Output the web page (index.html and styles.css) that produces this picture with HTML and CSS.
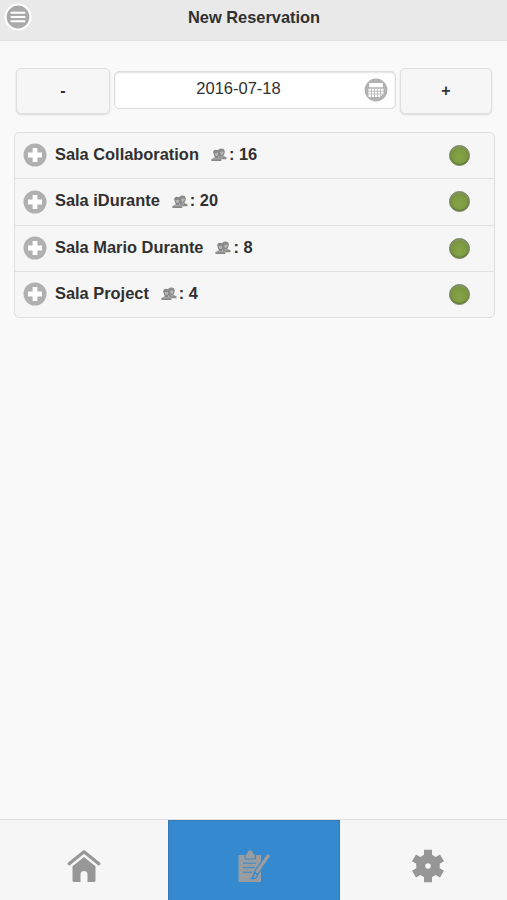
FILE: index.html
```html
<!DOCTYPE html>
<html lang="en">
<head>
<meta charset="utf-8">
<title>New Reservation</title>
<link rel="stylesheet" href="styles.css">
</head>
<body>
<svg class="defs" width="0" height="0" aria-hidden="true">
  <defs>
    <symbol id="plus" viewBox="0 0 24 24"><circle cx="12" cy="12" r="11.5" fill="#b0b0b0"/><path d="M12 5v14M5 12h14" stroke="#fff" stroke-width="4.8"/></symbol>
    <symbol id="people" viewBox="0 0 16 14">
      <path d="M7 3.5C7 1.2 8.2.5 10.3.5S14 1.500 13.800 4L13.200 6.500 12.300 8 15.500 9.200V11.200H9L7 8z" fill="#8b8b8b"/>
      <path d="M2.200 4.500C2.200 2.300 3.700 1.600 5.700 1.900 7.700 2 8.500 3.500 8.200 5.500L7.200 8.200 6.800 9.200 10.300 10.700V13H.4V10.900L4 9.300 3.300 7.900z" fill="#858585"/>
      <path d="M3.500 5.200 6.500 4.400 7.500 5.400 6.500 8H4.500zM9 4 11.800 3.200 12.800 4.500 11.500 7H10z" fill="#b4b4b4"/>
      <path d="M.5 10.800H10.500M9.500 8.800H12.500" stroke="#ddd" stroke-width=".5"/>
    </symbol>
  </defs>
</svg>
<div class="page">
  <header class="header">
    <svg class="menu" viewBox="0 0 28 28"><circle cx="14" cy="14" r="13.500" fill="#fff"/><circle cx="14" cy="14" r="11.400" fill="#aaa"/><path d="M7.500 9.700h13M7.500 14h13M7.500 18.300h13" stroke="#fff" stroke-width="2" stroke-linecap="round"/></svg>
    <h1>New Reservation</h1>
  </header>
  <main class="content">
    <div class="datebar">
      <button class="step">-</button>
      <div class="date"><span>2016-07-18</span>
        <svg class="calendar" viewBox="0 0 24 24"><circle cx="12" cy="12" r="11.400" fill="#b1b1b1"/><path d="M5.200 5h13.600v4.300H5.200zM4.500 10.700h15v4.800l-3.300 3.400H4.500z" fill="#fff"/><path d="M4.500 13.300h15M4.500 16h15M7.500 10.700v8.200M10.500 10.700v8.200M13.500 10.700v8.200M16.500 10.700v8.200" stroke="#b9b9b9" stroke-width=".9"/></svg>
      </div>
      <button class="step">+</button>
    </div>
    <ul class="rooms">
      <li><svg class="plus"><use href="#plus"/></svg><span class="name">Sala Collaboration</span><svg class="people"><use href="#people"/></svg><span class="count">: 16</span><i class="status"></i></li>
      <li><svg class="plus"><use href="#plus"/></svg><span class="name">Sala iDurante</span><svg class="people"><use href="#people"/></svg><span class="count">: 20</span><i class="status"></i></li>
      <li><svg class="plus"><use href="#plus"/></svg><span class="name">Sala Mario Durante</span><svg class="people"><use href="#people"/></svg><span class="count">: 8</span><i class="status"></i></li>
      <li><svg class="plus"><use href="#plus"/></svg><span class="name">Sala Project</span><svg class="people"><use href="#people"/></svg><span class="count">: 4</span><i class="status"></i></li>
    </ul>
  </main>
  <nav class="tabs">
    <a><svg viewBox="0 0 34 34"><path d="M2.200 14.800 17 2.800 31.800 14.800" fill="none" stroke="#979797" stroke-width="3.200" stroke-linecap="round" stroke-linejoin="round"/><path d="M17 8 28.500 17.200v14.300q0 1.500-1.500 1.500h-6.500V25.500a3.500 3.500 0 0 0-7 0V33H7q-1.500 0-1.500-1.500V17.200z" fill="#979797"/></svg></a>
    <a class="active"><svg viewBox="0 0 34 34"><path d="M1.500 6H24v27H1.500z" fill="#999da1"/><path d="M8 10V5.800L9.700 4.500Q10 .8 13.200.8t3.500 3.700l1.700 1.300V10z" fill="#999da1" stroke="#3489cf" stroke-width="1"/><path d="M6 14.200h13M6 18.700h12M6 23.200h9" stroke="#3489cf" stroke-width="1"/><path d="M31 7 19.500 23.500" stroke="#3489cf" stroke-width="5.600" stroke-linecap="round"/><path d="M31 7 20 22.800" stroke="#999da1" stroke-width="3.400" stroke-linecap="round"/><path d="M17.500 24.500q2.500-.5 3 1.500-.2 4-6 3.500 2-1.500 3-5z" fill="#999da1" stroke="#3489cf" stroke-width="1.300"/></svg></a>
    <a class="settings"><svg viewBox="0 0 34 34"><g stroke="#969696" stroke-width="8" stroke-linecap="butt"><path d="M17 .8v32.400M3 8.900l28 16.200M31 8.900 3 25.100"/></g><circle cx="17" cy="17" r="11.800" fill="#969696"/><circle cx="17" cy="17" r="2.800" fill="#f6f6f6"/></svg></a>
  </nav>
</div>
</body>
</html>
```
FILE: styles.css
```css
* { box-sizing: border-box; }
body {
  margin: 0;
  background: #f9f9f9;
  color: #303030;
  font-family: "Liberation Sans", Arial, sans-serif;
  font-size: 16.4px;
}
.defs { position: absolute; }
.page { display: flex; flex-direction: column; height: 900px; overflow: hidden; }
.header {
  display: grid;
  grid-template-columns: 34px 1fr 33px;
  height: 41px;
  padding-top: 3px;
  background: #e9e9e9;
  border-bottom: 1px solid #e1e1e1;
}
.menu { width: 28px; height: 28px; margin-left: 3.5px; }
h1 { margin: 0; padding-top: 1px; font-size: 16.4px; line-height: 26px; text-align: center; }
.content { flex: 1; padding: 27px 12px 0 14px; }
.datebar { display: flex; align-items: flex-start; gap: 4px; padding-left: 2px; padding-right: 3px; height: 64px; }
.step {
  width: 94px;
  height: 46px;
  padding: 0;
  background: #f6f6f6;
  border: 1px solid #dfdfdf;
  border-radius: 5px;
  box-shadow: 0 1px 2px rgba(0, 0, 0, .12);
  color: #303030;
  font: bold 16px "Liberation Sans", Arial, sans-serif;
}
.step:last-child { width: 92px; }
.date {
  display: flex;
  flex: 1;
  align-items: center;
  height: 38px;
  margin-top: 3px;
  padding-right: 7px;
  background: #fff;
  border: 1px solid #dcdcdc;
  border-radius: 5px;
  box-shadow: inset 0 1px 2px rgba(0, 0, 0, .12);
}
.date span { flex: 1; padding-right: 2px; padding-bottom: 3px; font-size: 16.5px; text-align: center; }
.calendar { width: 24px; height: 24px; }
.rooms {
  margin: 0;
  padding: 0;
  list-style: none;
  border: 1px solid #dfdfdf;
  border-radius: 5px;
  background: #f6f6f6;
  font-weight: bold;
}
.rooms li { display: flex; align-items: center; height: 46px; padding: 0 24px 1px 8px; }
.rooms li:first-child { height: 45px; }
.rooms li:nth-child(2) { height: 47px; }
.rooms li + li { border-top: 1px solid #e1e1e1; }
.plus { width: 24px; height: 24px; margin-right: 8px; }
.name, .count { line-height: 20px; padding-bottom: 3px; white-space: pre; }
.people { width: 16px; height: 14px; margin: 0 2px 0 12px; }
.status {
  width: 21px;
  height: 21px;
  margin-left: auto;
  border: 1px solid #71805d;
  border-radius: 50%;
  background: radial-gradient(ellipse at 50% 65%, #86a447 0%, #7b993f 55%, #70853f 100%);
  box-shadow: inset 0 1px 1px #8b967f, inset 0 -1px 1px #5e7435;
}
.tabs {
  display: grid;
  grid-template-columns: 168px 172px 1fr;
  height: 81px;
  background: #f6f6f6;
  border-top: 1px solid #dedede;
}
.tabs a { display: flex; justify-content: center; padding-top: 29px; }
.tabs svg { width: 34px; height: 34px; }
.tabs .active { background: #3489cf; border: 1px solid #387bb3; border-bottom: 0; padding-top: 28px; }
.tabs .settings { padding-left: 8px; }
```
